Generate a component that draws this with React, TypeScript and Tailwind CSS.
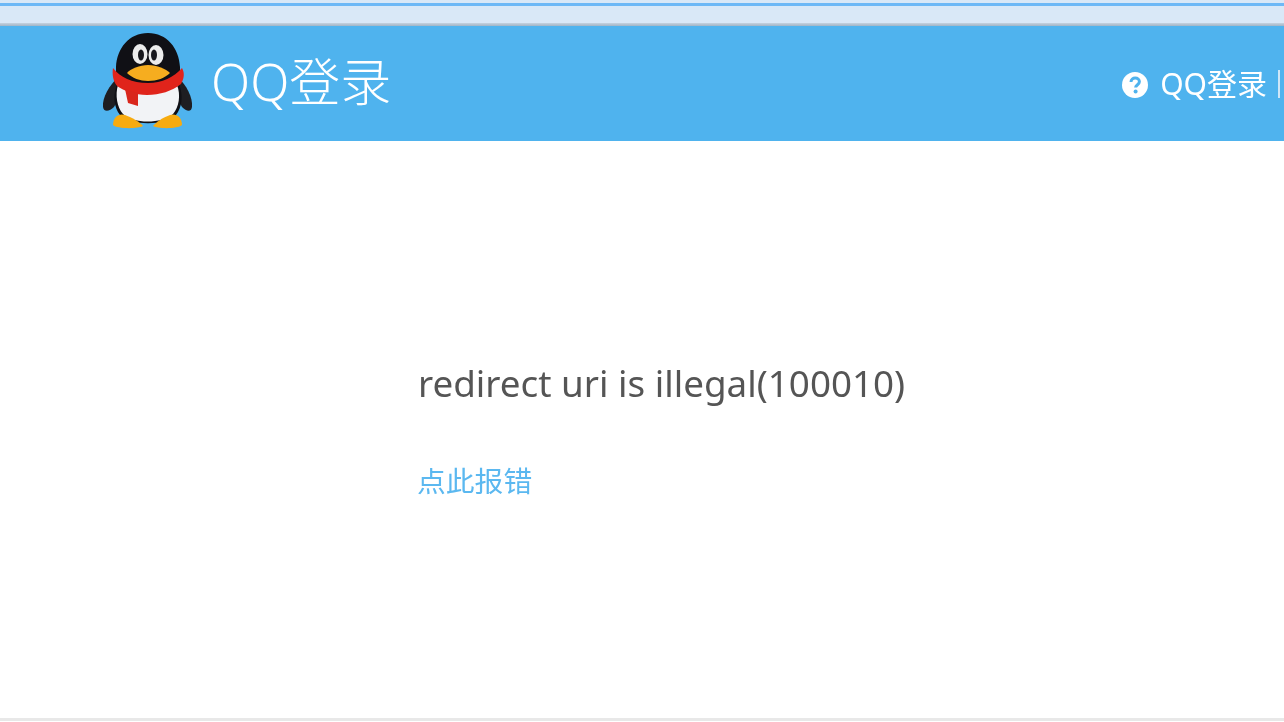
const cjk = "font-['Noto_Sans','Noto_Sans_CJK_SC',sans-serif]";

function Penguin() {
  return (
    <svg width="92" height="100" viewBox="0 0 92 100" className="mb-[6px] shrink-0 blur-[0.6px]">
      {/* flippers */}
      <path d="M16 46 C8 54 0 66 1 76 C2 82 8 80 12 76 L20 62 Z" fill="#1e1e22" />
      <path d="M76 46 C84 54 91 66 90 76 C89 82 84 80 80 76 L72 62 Z" fill="#1e1e22" />
      {/* head and back */}
      <path d="M46 2 C27 2 15 17 14 36 L14 56 C11 66 12 76 18 84 C28 95 64 95 74 84 C80 76 81 66 78 56 L78 36 C77 17 65 2 46 2 Z" fill="#101015" />
      {/* belly */}
      <path d="M16 54 C28 64 62 64 75 54 C79 64 77 76 71 83 C60 93 31 93 21 83 C15 76 13 64 16 54 Z" fill="#f2f3f6" />
      {/* eyes */}
      <ellipse cx="38" cy="23" rx="7.5" ry="10" fill="#ececec" />
      <ellipse cx="54" cy="24" rx="7.5" ry="10" fill="#ececec" />
      <ellipse cx="39" cy="24" rx="3" ry="5.5" fill="#17171c" />
      <ellipse cx="52" cy="24" rx="3" ry="5.5" fill="#17171c" />
      {/* scarf */}
      <path d="M11 37 C18 46 30 52 46 52 C60 52 72 46 80 37 C83 42 82 48 79 53 C70 60 58 64 45 64 C33 64 22 60 15 55 C11 50 10 43 11 37 Z" fill="#e0241b" />
      <path d="M23 58 L36 62 L36 75 L26 72 Z" fill="#d9261c" />
      {/* beak */}
      <path d="M46 34 C38 34 28 38 25 42 C30 47 38 50 46 50 C55 50 63 47 68 42 C64 38 55 34 46 34 Z" fill="#f6ad1f" />
      {/* feet */}
      <path d="M11 94 C11 86 17 82 23 84 C29 86 38 91 41 95 C36 98 15 98 11 94 Z" fill="#f7ab10" />
      <path d="M80 94 C80 86 74 82 68 84 C62 86 54 91 51 95 C56 98 76 98 80 94 Z" fill="#f7ab10" />
    </svg>
  );
}

function HelpIcon() {
  return (
    <svg width="26" height="26" viewBox="0 0 26 26" className="mt-[3px] shrink-0 blur-[0.4px]">
      <circle cx="13" cy="13" r="13" fill="#ffffff" />
      <path d="M9 10 C9 7.5 11 6 13.2 6 C15.6 6 17.4 7.6 17.4 9.8 C17.4 12.6 13.6 12.8 13.6 15.6" fill="none" stroke="#4fb3ee" strokeWidth="3" />
      <circle cx="13.6" cy="19.6" r="2" fill="#4fb3ee" />
    </svg>
  );
}

export default function App() {
  return (
    <div className={`flex h-[722px] w-[1284px] flex-col overflow-hidden bg-white ${cjk}`}>
      {/* browser chrome strip */}
      <div className="h-[3px] bg-[#d9e8f7]" />
      <div className="h-[3px] bg-[#6db8f6]" />
      <div className="h-[17px] bg-[#d9e8f7]" />
      <div className="h-[3px] bg-gradient-to-b from-[#c5d2df] to-[#9fb4c6]" />

      <header className="flex h-[115px] items-center justify-between bg-[#4fb3ee] pl-[102px] pr-[4px]">
        <div className="flex items-center gap-[17px]">
          <Penguin />
          <span className="mb-[4px] text-[51px] font-light leading-none text-white blur-[0.4px]">QQ登录</span>
        </div>
        <div className="flex items-center text-white">
          <HelpIcon />
          <span className="ml-[12px] text-[30px] leading-none blur-[0.4px]">QQ登录</span>
          <span className="ml-[11px] h-[28px] w-[2px] bg-[#cfe6f7]" />
        </div>
      </header>

      <main className="flex-1 pl-[418px] pt-[216px]">
        <p className="text-[36.8px] leading-[52px] text-[#555555] blur-[0.4px]">redirect uri is illegal(100010)</p>
        <a className="mt-[52px] -ml-[1px] block text-[28.8px] leading-[40px] text-[#5bb8f0] blur-[0.4px]">点此报错</a>
      </main>

      <div className="mb-[1px] h-[3px] bg-[#e8e8e8]" />
    </div>
  );
}
